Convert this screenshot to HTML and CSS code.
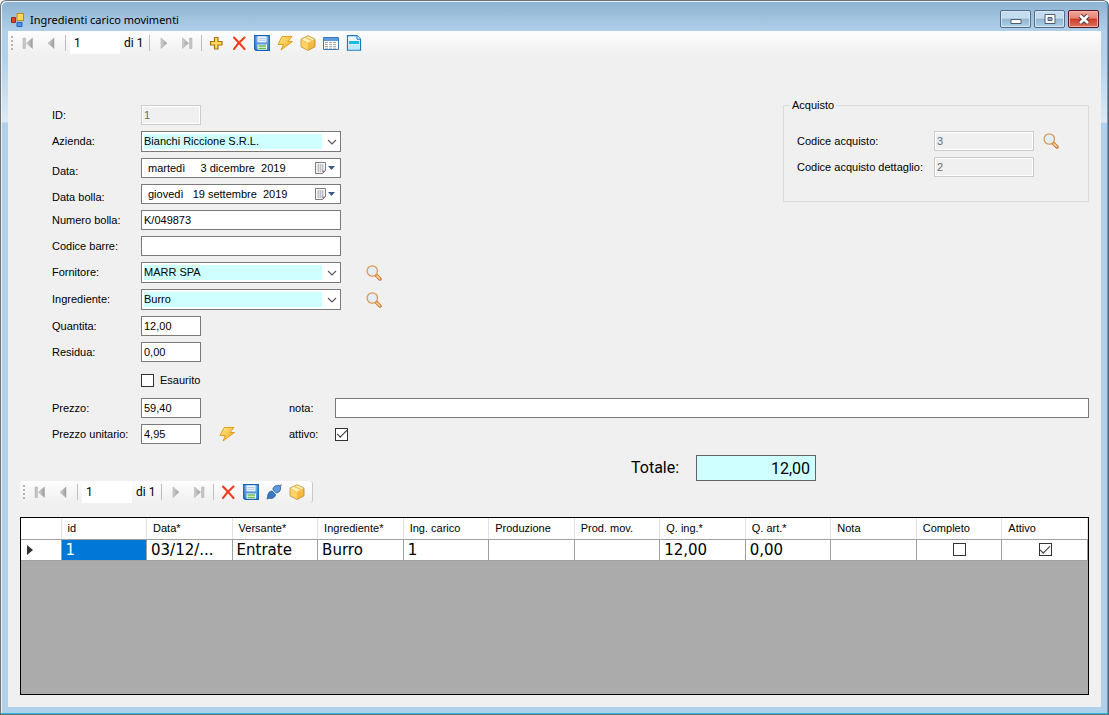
FILE: index.html
```html
<!DOCTYPE html>
<html lang="it">
<head>
<meta charset="utf-8">
<title>Ingredienti carico movimenti</title>
<link rel="stylesheet" href="styles.css">
</head>
<body>
<svg class="defs" aria-hidden="true">
  <defs>
    <linearGradient id="gold" x1="0" y1="0" x2="1" y2="1"><stop offset="0" stop-color="#ffe98a"/><stop offset="1" stop-color="#f0a81c"/></linearGradient>
    <linearGradient id="grey" x1="0" y1="0" x2="1" y2="0"><stop offset="0" stop-color="#d2d2d2"/><stop offset="1" stop-color="#9a9a9a"/></linearGradient>
    <linearGradient id="blue" x1="0" y1="0" x2="0" y2="1"><stop offset="0" stop-color="#7db4ea"/><stop offset="1" stop-color="#3d85cf"/></linearGradient>
  </defs>
  <symbol id="i-first" viewBox="0 0 16 16"><path d="M3 3h2.500v10.500H3z" fill="#c5c5c5" stroke="#b0b0b0" stroke-width=".5"/><path d="M12.500 3v10.500L6.500 8.200z" fill="url(#grey)" stroke="#b0b0b0" stroke-width=".6"/></symbol>
  <symbol id="i-prev" viewBox="0 0 16 16"><path d="M11 3v10.500L5 8.200z" fill="url(#grey)" stroke="#b0b0b0" stroke-width=".6"/></symbol>
  <symbol id="i-next" viewBox="0 0 16 16"><path d="M5 3v10.500l6-5.300z" fill="url(#grey)" stroke="#b0b0b0" stroke-width=".6"/></symbol>
  <symbol id="i-last" viewBox="0 0 16 16"><path d="M3.500 3v10.500l6-5.300z" fill="url(#grey)" stroke="#b0b0b0" stroke-width=".6"/><path d="M10.500 3H13v10.500h-2.500z" fill="#c5c5c5" stroke="#b0b0b0" stroke-width=".5"/></symbol>
  <symbol id="i-add" viewBox="0 0 16 16"><path d="M6.500 2.500h3.500V6.500h4V10h-4v4H6.500v-4h-4V6.500h4z" fill="#ffd75a" stroke="#a87512" stroke-width="1.200"/></symbol>
  <symbol id="i-delete" viewBox="0 0 16 16"><path d="M3 2.500C6.500 6 9 9 13.500 14M13.500 2.500C10 5.500 6 9.500 3 14" fill="none" stroke="#f13a1c" stroke-width="2.100" stroke-linecap="round"/></symbol>
  <symbol id="i-save" viewBox="0 0 16 16"><path d="M.7.700h14.600v14.600H2L.7 14z" fill="url(#blue)" stroke="#1763b5" stroke-width="1.300"/><path d="M3.500 1.300h9v6h-9z" fill="#eef5fc"/><path d="M4.500 3.500h7M4.500 5.300h7" stroke="#b5cbe0"/><path d="M3.500 9.500h9.500v5.200H3.500z" fill="#f4faf2"/><path d="M4.500 11h7.500M4.500 13.300h7.500" stroke="#62bd4f" stroke-width="1.300"/></symbol>
  <symbol id="i-bolt" viewBox="0 0 16 16"><path d="M5 1.500h10l-4 5h4.500L4 15l2.500-5.500H1z" fill="url(#gold)" stroke="#e5a01b" stroke-width="1" stroke-linejoin="round"/></symbol>
  <symbol id="i-box" viewBox="0 0 16 16"><path d="M8 .7l7 3.500v7.600l-7 3.700-7-3.700V4.200z" fill="#f5b93c" stroke="#bd8727" stroke-width=".8" stroke-linejoin="round"/><path d="M1.500 4.300L8 1.200l6.500 3.100L8 7.800z" fill="#fff0b9"/><path d="M1.500 4.800L8 8.200v6.700l-6.500-3.500z" fill="#ffd36a"/><path d="M4.500 2.800l6.800 3.300v3l1.500-.8v-3L6 2.100z" fill="#f4c451"/></symbol>
  <symbol id="i-table" viewBox="0 0 16 16"><path d="M.5 2.500h15v12H.5z" fill="#fff" stroke="#3a78bd"/><path d="M1 3h14v3H1z" fill="#5d9bdd"/><path d="M2 7.500h12M2 9.500h12M2 11.500h12M2 13.200h12" stroke="#a5abb1" stroke-dasharray="3 1"/></symbol>
  <symbol id="i-doc" viewBox="0 0 16 16"><path d="M1.500.700h9.500l3.500 3.500v11h-13z" fill="#eaf9ff" stroke="#187bc1" stroke-width="1.200"/><path d="M11 .7v3.500h3.500" fill="#fff" stroke="#187bc1"/><path d="M3 6h10v3H3z" fill="#16bdea"/><path d="M2.500 9.500h11v5h-11z" fill="#bee8f9"/></symbol>
  <symbol id="i-plug" viewBox="0 0 16 16"><path d="M.8 15.200l2.500-2.500M12.500 3.500l3-2.800" stroke="#6b7f93" stroke-width="1.300"/><path d="M2 10c1-2.500 3.500-3.500 5-2.500l2.500 3c0 2.500-2.500 4-5 4L1.500 14z" fill="#3d78c0" stroke="#285a9c" stroke-width=".8"/><path d="M6.800 5C8 1.500 11 1 13.500 1.500l1 1.500c.5 3-1 5.500-3.700 6L9 8.500z" fill="#5b98dd" stroke="#285a9c" stroke-width=".8"/><path d="M6.500 6.500l3.800 3.500" stroke="#e6f0fa" stroke-width="1"/></symbol>
  <symbol id="i-search" viewBox="0 0 16 16"><path d="M10.300 10.300l3.700 3.700" stroke="#c66f38" stroke-width="3.400" stroke-linecap="round"/><path d="M11 11l2.700 2.700" stroke="#f7cf87" stroke-width="1.800" stroke-linecap="round"/><circle cx="6.300" cy="6" r="5.200" fill="#e2eefa" stroke="#dc9a56" stroke-width="1.300"/></symbol>
  <symbol id="i-chevron" viewBox="0 0 16 16"><path d="M4 6l4 4 4-4" fill="none" stroke="#555" stroke-width="1.100"/></symbol>
  <symbol id="i-calendar" viewBox="0 0 22 16"><path d="M1.500 2.500h10v8l-3 3h-7z" fill="#f8f8f8" stroke="#85777a"/><path d="M3 5h7M3 7h7M3 9h7M3 11h5M4.500 4v8M6.500 4v8M8.500 4v8" stroke="#aeb5c0" stroke-width=".7"/><path d="M11.500 10.500h-3v3z" fill="#85777a"/><path d="M14 6h7l-3.500 4z" fill="#3b5c8a"/></symbol>
</svg>

<div class="window">
  <header class="titlebar">
    <svg class="icon" viewBox="0 0 16 16" aria-hidden="true"><path d="M1.500 5.500h4v5h-4z" fill="#e5402c" stroke="#9d2115"/><path d="M7 1.500h6.500v7H7z" fill="#ffd85b" stroke="#bd8815"/><path d="M7 10.500h5v4H7z" fill="#4f98ec" stroke="#2460ae"/></svg>
    <h1 class="title">Ingredienti carico movimenti</h1>
    <div class="controls">
      <button class="control" type="button" aria-label="Riduci a icona"><svg class="control-icon" viewBox="0 0 14 14"><path d="M2 7.500h10v4H2z" fill="#fff" stroke="#505c6b"/></svg></button>
      <button class="control" type="button" aria-label="Ingrandisci"><svg class="control-icon" viewBox="0 0 14 14"><path d="M2 2.500h10v9H2z" fill="#fff" stroke="#505c6b"/><path d="M5 5.500h4v3H5z" fill="#8bb5d8" stroke="#505c6b"/></svg></button>
      <button class="control control-close" type="button" aria-label="Chiudi"><svg class="control-icon" viewBox="0 0 14 14"><path d="M3 3.500l8 7.500M11 3.500L3 11" stroke="#554048" stroke-width="4.600"/><path d="M3 3.500l8 7.500M11 3.500L3 11" stroke="#fff" stroke-width="2.500"/></svg></button>
    </div>
  </header>

  <main class="client">
    <nav class="toolbar" aria-label="Navigazione carico">
      <span class="grip"></span>
      <button class="tool" type="button" aria-label="Primo"><svg class="icon"><use href="#i-first"/></svg></button>
      <button class="tool" type="button" aria-label="Precedente"><svg class="icon"><use href="#i-prev"/></svg></button>
      <span class="divider"></span>
      <input class="position" type="text" value="1" aria-label="Posizione">
      <span class="count">di 1</span>
      <span class="divider"></span>
      <button class="tool" type="button" aria-label="Successivo"><svg class="icon"><use href="#i-next"/></svg></button>
      <button class="tool" type="button" aria-label="Ultimo"><svg class="icon"><use href="#i-last"/></svg></button>
      <span class="divider"></span>
      <button class="tool" type="button" aria-label="Aggiungi"><svg class="icon"><use href="#i-add"/></svg></button>
      <button class="tool" type="button" aria-label="Elimina"><svg class="icon"><use href="#i-delete"/></svg></button>
      <button class="tool" type="button" aria-label="Salva"><svg class="icon"><use href="#i-save"/></svg></button>
      <button class="tool" type="button" aria-label="Calcola"><svg class="icon"><use href="#i-bolt"/></svg></button>
      <button class="tool" type="button" aria-label="Articoli"><svg class="icon"><use href="#i-box"/></svg></button>
      <button class="tool" type="button" aria-label="Elenco"><svg class="icon"><use href="#i-table"/></svg></button>
      <button class="tool" type="button" aria-label="Documento"><svg class="icon"><use href="#i-doc"/></svg></button>
    </nav>

    <form class="details">
      <div class="upper">
        <div class="rows">
          <div class="row"><label class="label" for="id">ID:</label><input class="field field-short" id="id" type="text" value="1" disabled></div>
          <div class="row"><label class="label" for="azienda">Azienda:</label><span class="combo"><select class="field field-select" id="azienda"><option>Bianchi Riccione S.R.L.</option></select><svg class="icon chevron"><use href="#i-chevron"/></svg></span></div>
          <div class="row"><label class="label label-low" for="data">Data:</label><span class="date"><input class="date-text" id="data" type="text" value="martedì     3 dicembre  2019"><button class="date-button" type="button" aria-label="Scegli data"><svg class="calendar"><use href="#i-calendar"/></svg></button></span></div>
          <div class="row"><label class="label label-low" for="bolla">Data bolla:</label><span class="date"><input class="date-text" id="bolla" type="text" value="giovedì   19 settembre  2019"><button class="date-button" type="button" aria-label="Scegli data bolla"><svg class="calendar"><use href="#i-calendar"/></svg></button></span></div>
          <div class="row"><label class="label" for="numero">Numero bolla:</label><input class="field" id="numero" type="text" value="K/049873"></div>
          <div class="row"><label class="label" for="barre">Codice barre:</label><input class="field" id="barre" type="text"></div>
          <div class="row"><label class="label" for="fornitore">Fornitore:</label><span class="combo"><select class="field field-select" id="fornitore"><option>MARR SPA</option></select><svg class="icon chevron"><use href="#i-chevron"/></svg></span><button class="action action-far" type="button" aria-label="Cerca fornitore"><svg class="icon"><use href="#i-search"/></svg></button></div>
          <div class="row"><label class="label" for="ingrediente">Ingrediente:</label><span class="combo"><select class="field field-select" id="ingrediente"><option>Burro</option></select><svg class="icon chevron"><use href="#i-chevron"/></svg></span><button class="action action-far" type="button" aria-label="Cerca ingrediente"><svg class="icon"><use href="#i-search"/></svg></button></div>
          <div class="row"><label class="label" for="quantita">Quantita:</label><input class="field field-short" id="quantita" type="text" value="12,00"></div>
          <div class="row"><label class="label" for="residua">Residua:</label><input class="field field-short" id="residua" type="text" value="0,00"></div>
          <div class="row row-check"><input class="check" id="esaurito" type="checkbox"><label for="esaurito">Esaurito</label></div>
        </div>
        <fieldset class="group">
          <legend class="legend">Acquisto</legend>
          <div class="row"><label class="label label-wide" for="acquisto">Codice acquisto:</label><input class="field field-medium" id="acquisto" type="text" value="3" disabled><button class="action" type="button" aria-label="Cerca acquisto"><svg class="icon"><use href="#i-search"/></svg></button></div>
          <div class="row"><label class="label label-wide" for="dettaglio">Codice acquisto dettaglio:</label><input class="field field-medium" id="dettaglio" type="text" value="2" disabled></div>
        </fieldset>
      </div>
      <div class="row"><label class="label" for="prezzo">Prezzo:</label><span class="price"><input class="field field-short" id="prezzo" type="text" value="59,40"></span><label class="label label-side" for="nota">nota:</label><input class="field field-fill" id="nota" type="text"></div>
      <div class="row"><label class="label" for="unitario">Prezzo unitario:</label><span class="price"><input class="field field-short" id="unitario" type="text" value="4,95"><button class="action action-price" type="button" aria-label="Calcola prezzo unitario"><svg class="icon"><use href="#i-bolt"/></svg></button></span><label class="label label-side" for="attivo">attivo:</label><input class="check" id="attivo" type="checkbox" checked></div>
      <div class="total"><label for="totale">Totale:</label><input class="total-value" id="totale" type="text" value="12,00"></div>
    </form>

    <section class="movements">
      <nav class="toolbar toolbar-inner" aria-label="Navigazione movimenti">
        <span class="grip"></span>
        <button class="tool" type="button" aria-label="Primo"><svg class="icon"><use href="#i-first"/></svg></button>
        <button class="tool" type="button" aria-label="Precedente"><svg class="icon"><use href="#i-prev"/></svg></button>
        <span class="divider"></span>
        <input class="position" type="text" value="1" aria-label="Posizione movimento">
        <span class="count">di 1</span>
        <span class="divider"></span>
        <button class="tool" type="button" aria-label="Successivo"><svg class="icon"><use href="#i-next"/></svg></button>
        <button class="tool" type="button" aria-label="Ultimo"><svg class="icon"><use href="#i-last"/></svg></button>
        <span class="divider"></span>
        <button class="tool" type="button" aria-label="Elimina"><svg class="icon"><use href="#i-delete"/></svg></button>
        <button class="tool" type="button" aria-label="Salva"><svg class="icon"><use href="#i-save"/></svg></button>
        <button class="tool" type="button" aria-label="Collega"><svg class="icon"><use href="#i-plug"/></svg></button>
        <button class="tool" type="button" aria-label="Articoli"><svg class="icon"><use href="#i-box"/></svg></button>
      </nav>
      <div class="grid">
        <table class="table">
          <colgroup><col class="col-marker"><col span="12"></colgroup>
          <thead><tr><th></th><th>id</th><th>Data*</th><th>Versante*</th><th>Ingrediente*</th><th>Ing. carico</th><th>Produzione</th><th>Prod. mov.</th><th>Q. ing.*</th><th>Q. art.*</th><th>Nota</th><th>Completo</th><th>Attivo</th></tr></thead>
          <tbody><tr><td class="marker"><svg class="marker-icon" viewBox="0 0 6 10"><path d="M0 0l6 5-6 5z" fill="#333"/></svg></td><td class="selected">1</td><td>03/12/...</td><td>Entrate</td><td>Burro</td><td>1</td><td></td><td></td><td>12,00</td><td>0,00</td><td></td><td class="center"><input class="check" type="checkbox" aria-label="Completo"></td><td class="center"><input class="check" type="checkbox" aria-label="Attivo" checked></td></tr></tbody>
        </table>
      </div>
    </section>
  </main>
</div>
</body>
</html>
```
FILE: styles.css
```css
* { box-sizing: border-box; }

body {
  margin: 0;
  background: #fff;
  color: #000;
  font: 11px/13px "Liberation Sans", Arial, sans-serif;
}

input, select, button { font: inherit; color: inherit; margin: 0; padding: 0; border-radius: 0; }
button { border: 0; background: none; }

.defs { position: absolute; width: 0; height: 0; }
.icon { display: block; flex: none; width: 16px; height: 16px; }

/* Window frame */
.window {
  display: flex;
  flex-direction: column;
  min-height: 100vh;
  padding: 0 6px 7px 7px;
  border: 1px solid #6f7378;
  border-right-color: #4c6a72;
  border-radius: 6px 6px 0 0;
  background: linear-gradient(#8cb3d1 0, #b0cfe9 30px, #b4d3ea 60px, #dceaf5 121px, #afd1eb 122px);
  box-shadow: inset -1px -1px #20bbd8, inset 1px 1px #e9f3fa;
}

.titlebar { display: flex; align-items: center; gap: 4px; height: 30px; padding: 8px 3px 0 2px; }
.title { flex: 1; margin: 0; font: 11px/16px "Noto Sans", "Open Sans", sans-serif; }
.controls { display: flex; gap: 3px; padding-bottom: 3px; }
.control {
  display: flex;
  align-items: center;
  justify-content: center;
  width: 31px;
  height: 18px;
  border: 1px solid #526b87;
  border-radius: 2px;
  background: linear-gradient(#c4dcef 0 45%, #91b5d2 50%, #aed0ea);
  box-shadow: inset 0 0 0 1px #d5e7f5;
}
.control-close { border-color: #5a1420; background: linear-gradient(#f3a89d 0, #e58272 45%, #cf3a22 50%, #df7360); box-shadow: inset 0 0 0 1px #f3b3a8; }
.control-icon { width: 14px; height: 14px; }

.client { flex: 1; display: flex; flex-direction: column; margin-right: 1px; background: #f0f0f0; }

/* Toolbars */
.toolbar { display: flex; align-items: center; height: 24px; background: linear-gradient(#fdfdfd, #f0f0f0); }
.toolbar-inner { align-self: flex-start; height: 22px; padding-right: 4px; border-right: 1px solid #c8c8c8; border-radius: 3px; }
.grip { width: 2px; height: 14px; margin: 0 3px; background: repeating-linear-gradient(#b5b5b5 0 2px, transparent 2px 4px); }
.tool { display: flex; align-items: center; justify-content: center; width: 23px; height: 22px; }
.divider { width: 1px; height: 16px; margin: 0 2px 0 3px; background: #bdbdbd; }
.position { width: 50px; height: 22px; margin-left: 2px; padding-left: 4px; border: 0; background: #fff; font: 12px Roboto, sans-serif; }
.count { width: 26px; padding-left: 4px; white-space: nowrap; font: 12px Roboto, sans-serif; }

/* Form */
.details { display: flex; flex-direction: column; gap: 6px; padding: 44px 12px 0 44px; }
.upper { display: flex; justify-content: space-between; align-items: flex-start; }
.rows { display: flex; flex-direction: column; gap: 6px; padding-top: 6px; }
.row { display: flex; align-items: center; }
.row-check { gap: 6px; height: 24px; padding-left: 89px; }
.label { flex: none; width: 89px; white-space: nowrap; }
.label-low { padding-top: 6px; }
.label-wide { width: 137px; }
.label-side { width: 46px; }

.field { width: 200px; height: 20px; padding: 0 2px; border: 1px solid #7a7a7a; background: #fff; }
.field-short { width: 60px; }
.field-medium { width: 100px; }
.field-fill { flex: 1; width: auto; min-width: 0; }
.field:disabled { border-color: #ccc; background: #f0f0f0; box-shadow: inset 0 0 0 1px #fff; color: #6d6d6d; }
.combo { position: relative; display: flex; }
.field-select {
  height: 21px;
  padding-bottom: 1px;
  appearance: none;
  background: linear-gradient(#d0ffff, #d0ffff) 2px 2px / 178px 15px no-repeat #fff;
}
.chevron { position: absolute; right: 1px; top: 3px; pointer-events: none; }
.date { display: flex; align-items: center; width: 200px; height: 20px; border: 1px solid #7a7a7a; background: #fff; }
.date-text { flex: 1; min-width: 0; padding-left: 6px; border: 0; background: none; }
.date-button { width: 26px; }
.calendar { display: block; width: 22px; height: 16px; }
.action { flex: none; margin-left: 9px; height: 16px; }
.action-far { margin-left: 25px; }
.action-price { margin-left: 18px; }
.price { display: flex; align-items: center; flex: none; width: 148px; }

.group { width: 306px; margin: 0; padding: 19px 13px 24px; border: 1px solid #dcdcdc; display: flex; flex-direction: column; gap: 6px; }
.legend { margin-left: -7px; padding: 0 2px; }

.check {
  appearance: none;
  display: inline-grid;
  place-items: center;
  flex: none;
  width: 13px;
  height: 13px;
  border: 1px solid #333;
  background: #fff;
}
.check:checked::after { content: ""; width: 9px; height: 4px; margin-bottom: 3px; border: solid #333; border-width: 0 0 1px 1px; transform: rotate(-45deg); }

.total { display: flex; align-items: center; gap: 17px; padding: 5px 0 0 579px; font: 16px/20px Roboto, sans-serif; }
.total-value { width: 120px; height: 26px; padding-right: 5px; border: 1px solid #646464; background: #d0ffff; text-align: right; }

/* Movements grid */
.movements { flex: 1; display: flex; flex-direction: column; gap: 14px; padding: 0 12px 12px; }
.grid { flex: 1; border: 1px solid #000; background: #ababab; }
.table { width: 100%; table-layout: fixed; border-collapse: collapse; background: #fff; }
.col-marker { width: 40px; }
.table th { height: 21px; padding: 0 6px; border-right: 1px solid #e2e2e2; border-bottom: 1px solid #a0a0a0; font-weight: 400; text-align: left; white-space: nowrap; }
.table td { height: 21px; padding: 0 3px 0 4px; border-right: 1px solid #a0a0a0; border-bottom: 1px solid #a0a0a0; font: 15px/20px "DejaVu Sans", sans-serif; white-space: nowrap; overflow: hidden; }
.table .selected { background: #0078d7; color: #fff; }
.table .center { text-align: center; line-height: 0; }
.table .marker { padding-left: 6px; }
.marker-icon { display: block; width: 6px; height: 10px; }
```
